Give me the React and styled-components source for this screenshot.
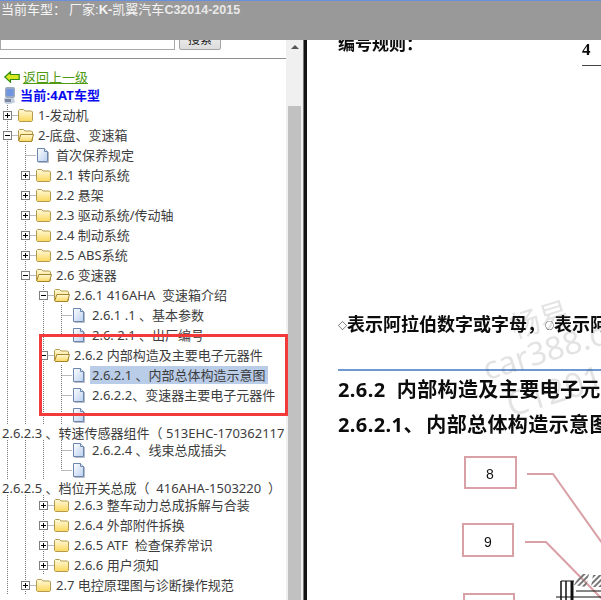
import React from "react";
import styled, { createGlobalStyle } from "styled-components";

const UI_FONT = `"Noto Sans", "Noto Sans CJK SC", sans-serif`;

// Styles
const GlobalStyle = createGlobalStyle`
  html, body {
    margin: 0;
    padding: 0;
    background: #fff;
    overflow: hidden;
  }
`;

const Page = styled.div`
  position: relative;
  display: flex;
  width: 601px;
  height: 600px;
  overflow: hidden;
  font-family: ${UI_FONT};
`;

const TopBar = styled.div`
  position: absolute;
  top: 0;
  left: 0;
  right: 0;
  z-index: 3;
  height: 39px;
  padding-left: 1px;
  border-top: 1px solid #6a8fdc;
  background: #999;
  color: #f4f4f4;
  font: 13px/18px "Liberation Sans", "Noto Sans CJK SC", sans-serif;
  white-space: pre;
`;

const BarGap = styled.span`
  display: inline-block;
  width: 3px;
`;

const BarCode = styled.span`
  font-size: 12.5px;
  font-weight: 700;
  color: #e8e8e8;
`;

const RedFrame = styled.div`
  position: absolute;
  top: 334px;
  left: 39px;
  z-index: 2;
  width: 243px;
  height: 76px;
  border: 3px solid #f23a3a;
`;

const Sidebar = styled.div`
  flex: none;
  width: 286px;
  height: 600px;
  overflow: hidden;
`;

const SearchRow = styled.div`
  display: flex;
  gap: 4px;
  height: 22px;
  padding-top: 28px;
`;

const SearchInput = styled.div`
  box-sizing: border-box;
  width: 175px;
  height: 22px;
  border: 1px solid #a9a9a9;
`;

const SearchButton = styled.div`
  box-sizing: border-box;
  width: 42px;
  height: 22px;
  border: 1px solid #a5a5a5;
  border-radius: 2px;
  background: linear-gradient(#f6f6f6, #dcdcdc);
  color: #222;
  font: 12px/20px "Noto Sans CJK SC", sans-serif;
  text-align: center;
`;

const Rule = styled.div`
  height: 1px;
  margin-top: 8px;
  background: #8f8f8f;
`;

const BackRow = styled.div`
  display: flex;
  align-items: center;
  gap: 3px;
  height: 18px;
  margin-top: 9px;
  padding-left: 4px;
`;

const BackLink = styled.a`
  color: #4f9a10;
  font-size: 13px;
  line-height: 18px;
  text-decoration: underline;
`;

const CurrentRow = styled.div`
  display: flex;
  align-items: center;
  gap: 4px;
  height: 18px;
  padding-left: 3px;
`;

const CurrentLabel = styled.b`
  color: #0a0aee;
  font-size: 13px;
  letter-spacing: 0.2px;
  line-height: 18px;
`;

const Tree = styled.div`
  margin-top: 1px;
  color: #3d3d3d;
  font-size: 13px;
  white-space: pre;
`;

const Row = styled.div`
  display: flex;
  align-items: center;
  height: 20px;
`;

const Guide = styled.span`
  flex: none;
  width: 18px;
  height: 100%;
  background: linear-gradient(#777 50%, transparent 50%) 7px 0 / 1px 2px repeat-y;
`;

const IconBox = styled.span`
  display: flex;
  flex: none;
  align-items: center;
  width: 18px;
`;

const Label = styled.span`
  margin-left: ${(p) => (p.$selected ? "0" : "2px")};
  padding: ${(p) => (p.$selected ? "0 2px" : "0")};
  background: ${(p) => (p.$selected ? "#b9cce8" : "transparent")};
  line-height: 18px;
`;

const WrappedLine = styled.div`
  height: 15px;
  padding-left: 2px;
  line-height: 17px;
`;

const ScrollTrack = styled.div`
  display: flex;
  flex: none;
  flex-direction: column;
  align-items: center;
  width: 17px;
  height: 600px;
  padding-top: 45px;
  box-sizing: border-box;
  background: #f0f0f0;
`;

const ScrollArrow = styled.div`
  width: 0;
  height: 0;
  border-right: 4px solid transparent;
  border-bottom: 4px solid #555;
  border-left: 4px solid transparent;
`;

const ScrollThumb = styled.div`
  flex: 1;
  width: 13px;
  margin-top: 57px;
  background: #c1c1c1;
`;

const Divider = styled.div`
  flex: none;
  box-sizing: border-box;
  width: 4px;
  height: 600px;
  border-left: 1px solid #777;
  background: #141414;
`;

const DocPane = styled.div`
  position: relative;
  flex: 1;
  min-width: 0;
  padding-left: 31px;
  overflow: hidden;
  filter: blur(0.25px);
  color: #0c0c0c;
  white-space: nowrap;
`;

const RuleLine = styled.div`
  display: flex;
  justify-content: space-between;
  height: 27px;
  margin-top: 33px;
`;

const RuleTitle = styled.b`
  font-size: 17px;
  line-height: 22px;
`;

const PartCode = styled.b`
  width: 19px;
  height: 26px;
  margin-top: 6px;
  border-bottom: 1px solid #444;
  font: 700 17px/22px "Liberation Serif", serif;
`;

const NumberNote = styled.b`
  display: block;
  margin-top: 252px;
  margin-bottom: 31px;
  font-size: 18px;
  line-height: 24px;
`;

const NoteMark = styled.span`
  font-size: 9px;
  font-weight: 400;
  vertical-align: 2px;
`;

const BlueRule = styled.div`
  height: 2px;
  background: #6d98d2;
`;

const SectionTitle = styled.b`
  display: block;
  margin-top: ${(p) => p.$top}px;
  font-size: 20px;
  letter-spacing: 0.4px;
  line-height: 28px;
  white-space: pre;
`;

const Diagram = styled.svg`
  display: block;
  width: 264px;
  height: 161px;
  margin-left: 1px;
  font-family: "Liberation Sans", sans-serif;
`;

const Watermark = styled.div`
  position: absolute;
  top: 325px;
  left: 163px;
  z-index: 1;
  color: rgba(60, 60, 60, 0.14);
  line-height: 1;
  transform: rotate(-17deg);
  transform-origin: left top;
`;

const MarkLine = styled.div`
  margin-top: ${(p) => p.$top || 0}px;
  margin-left: ${(p) => p.$left}px;
  font-size: ${(p) => p.$size}px;
`;

// Icons
const Joint = ({ type, last }) => {
  const isBox = type === "plus" || type === "minus";
  return (
    <svg width="18" height="20" style={{ flex: "none" }}>
      <g stroke="#777" strokeDasharray="1 1" fill="none">
        <path d={last ? "M7.5 0V10" : "M7.5 0V20"} />
        <path d="M7.5 10.5H18" />
      </g>
      {isBox && (
        <>
          <rect x="3.5" y="6.5" width="8" height="8" fill="#fff" stroke="#7f7f7f" />
          <path d="M5 10.5H10" stroke="#000" />
          {type === "plus" && <path d="M7.5 8V13" stroke="#000" />}
        </>
      )}
    </svg>
  );
};

const Folder = ({ open }) => (
  <svg width="16" height="14" viewBox="0 0 16 14">
    <defs>
      <linearGradient id="fold" x1="0" y1="0" x2="0" y2="1">
        <stop offset="0" stopColor="#fffadb" />
        <stop offset="1" stopColor="#fbd75c" />
      </linearGradient>
    </defs>
    <path d="M.5 12.5V2.5L1.5 1.5H5.5L7 3H13.5L14.5 4V12.5L13.5 13.5H1.5Z" fill="url(#fold)" stroke="#b39a4e" />
    {open && <path d="M.8 12.5L2.8 6.5H15.5L13.5 13.5H1.5Z" fill="url(#fold)" stroke="#a58430" />}
  </svg>
);

const Sheet = () => (
  <svg width="13" height="15" viewBox="0 0 13 15">
    <defs>
      <linearGradient id="sheet" x1="0" y1="0" x2="1" y2="1">
        <stop offset="0" stopColor="#fff" />
        <stop offset="1" stopColor="#b9d0ef" />
      </linearGradient>
    </defs>
    <path d="M1.5 .5H8.5L11.5 3.5V13.5H1.5Z" fill="url(#sheet)" stroke="#6d86ad" />
    <path d="M8.5 .5V3.5H11.5" fill="#dfe9f7" stroke="#6d86ad" />
    <path d="M12.5 4V14.5H2.5" fill="none" stroke="#b6bcc6" />
  </svg>
);

const BackArrow = () => (
  <svg width="16" height="12" viewBox="0 0 16 12">
    <path d="M.8 6L6.5 .8V3.5H15.2V8.5H6.5V11.2Z" fill="#d8e820" stroke="#2d8a12" strokeWidth="1.2" />
  </svg>
);

const Computer = () => (
  <svg width="13" height="17" viewBox="0 0 13 17">
    <rect x="2" y="0" width="10" height="11" rx="2" fill="#9aa8c0" />
    <rect x="3.5" y="2" width="7" height="7" fill="#6f94e0" />
    <path d="M1 11H11L12 15.5L7 17H3L1 15Z" fill="#c4cfe0" />
    <path d="M2 12H8V15H2Z" fill="#7a86a0" />
  </svg>
);

// Data
const topRows = [
  { guides: 0, joint: "plus", icon: "folder", label: "1-发动机" },
  { guides: 0, joint: "minus", icon: "open", label: "2-底盘、变速箱" },
  { guides: 1, joint: "leaf", icon: "sheet", label: "首次保养规定" },
  { guides: 1, joint: "plus", icon: "folder", label: "2.1 转向系统" },
  { guides: 1, joint: "plus", icon: "folder", label: "2.2 悬架" },
  { guides: 1, joint: "plus", icon: "folder", label: "2.3 驱动系统/传动轴" },
  { guides: 1, joint: "plus", icon: "folder", label: "2.4 制动系统" },
  { guides: 1, joint: "plus", icon: "folder", label: "2.5 ABS系统" },
  { guides: 1, joint: "minus", icon: "open", label: "2.6 变速器" },
  { guides: 2, joint: "minus", icon: "open", label: "2.6.1 416AHA  变速箱介绍" },
  { guides: 3, joint: "leaf", icon: "sheet", label: "2.6.1 .1 、基本参数" },
  { guides: 3, joint: "leaf", last: true, icon: "sheet", label: "2.6. 2.1 、出厂编号" },
  { guides: 2, joint: "minus", icon: "open", label: "2.6.2 内部构造及主要电子元器件" },
  { guides: 3, joint: "leaf", icon: "sheet", label: "2.6.2.1 、内部总体构造示意图", selected: true },
  { guides: 3, joint: "leaf", icon: "sheet", label: "2.6.2.2、变速器主要电子元器件" },
  { guides: 3, joint: "leaf", icon: "sheet", label: "" },
];

const middleRows = [
  { guides: 3, joint: "leaf", icon: "sheet", label: "2.6.2.4 、线束总成插头" },
  { guides: 3, joint: "leaf", last: true, icon: "sheet", label: "" },
];

const bottomRows = [
  { guides: 2, joint: "plus", icon: "folder", label: "2.6.3 整车动力总成拆解与合装" },
  { guides: 2, joint: "plus", icon: "folder", label: "2.6.4 外部附件拆换" },
  { guides: 2, joint: "plus", icon: "folder", label: "2.6.5 ATF  检查保养常识" },
  { guides: 2, joint: "plus", icon: "folder", label: "2.6.6 用户须知" },
  { guides: 1, joint: "plus", icon: "folder", label: "2.7 电控原理图与诊断操作规范" },
];

const TreeRow = ({ guides, joint, last, icon, label, selected }) => (
  <Row>
    {Array.from({ length: guides }, (_, i) => <Guide key={i} />)}
    <Joint type={joint} last={last} />
    <IconBox>
      {icon === "sheet" ? <Sheet /> : <Folder open={icon === "open"} />}
    </IconBox>
    {label && <Label $selected={selected}>{label}</Label>}
  </Row>
);

export default function App() {
  return (
    <Page>
      <GlobalStyle />
      <TopBar>当前车型：<BarGap />厂家:<b>K-</b>凯翼汽车<BarCode>C32014-2015</BarCode></TopBar>
      <RedFrame />

      <Sidebar>
        <SearchRow>
          <SearchInput />
          <SearchButton>搜索</SearchButton>
        </SearchRow>
        <Rule />
        <BackRow>
          <BackArrow />
          <BackLink>返回上一级</BackLink>
        </BackRow>
        <CurrentRow>
          <Computer />
          <CurrentLabel>当前:4AT车型</CurrentLabel>
        </CurrentRow>
        <Tree>
          {topRows.map((row, i) => <TreeRow key={i} {...row} />)}
          <WrappedLine>2.6.2.3 、转速传感器组件（ 513EHC-170362117</WrappedLine>
          {middleRows.map((row, i) => <TreeRow key={i} {...row} />)}
          <WrappedLine>2.6.2.5 、档位开关总成（  416AHA-1503220  ）</WrappedLine>
          {bottomRows.map((row, i) => <TreeRow key={i} {...row} />)}
        </Tree>
      </Sidebar>

      <ScrollTrack>
        <ScrollArrow />
        <ScrollThumb />
      </ScrollTrack>
      <Divider />

      <DocPane>
        <RuleLine>
          <RuleTitle>编号规则：</RuleTitle>
          <PartCode>4</PartCode>
        </RuleLine>
        <NumberNote>
          <NoteMark>◇</NoteMark>表示阿拉伯数字或字母，<NoteMark>○</NoteMark>表示阿拉伯数字
        </NumberNote>
        <BlueRule />
        <SectionTitle $top={5}>2.6.2  内部构造及主要电子元器件</SectionTitle>
        <SectionTitle $top={7}>2.6.2.1、{"\u200A"}内部总体构造示意图</SectionTitle>
        <Diagram viewBox="0 0 264 161">
          <defs>
            <pattern id="hatch" width="4" height="4" patternUnits="userSpaceOnUse" patternTransform="rotate(45)">
              <rect width="2" height="4" fill="#777" />
            </pattern>
          </defs>
          <g fill="none" stroke="#d9a0a5" strokeWidth="2">
            <rect x="126" y="18" width="51" height="31" />
            <rect x="124" y="85" width="50" height="32" />
            <rect x="125" y="155" width="50" height="31" />
            <path d="M188 35H214L263 104" />
            <path d="M186 103H207L263 160" />
          </g>
          <g fontSize="14" fill="#111" textAnchor="middle">
            <text x="151" y="40">8</text>
            <text x="149" y="108">9</text>
          </g>
          <path d="M235 146L241 135H250L247 148Z M252 148L254 136H264V148Z" fill="url(#hatch)" />
          <g fill="none" stroke="#111">
            <path d="M222 142H235" strokeWidth="1" />
            <path d="M222 142V161M227 142V161" strokeWidth="1.5" />
            <path d="M233 142V161" strokeWidth="3" />
            <path d="M217 158H264" strokeWidth="1.2" />
            <path d="M237 152H264" strokeWidth="1" />
          </g>
        </Diagram>
        <Watermark>
          <MarkLine $left={38} $size={30}>畅易</MarkLine>
          <MarkLine $left={0} $size={32}>car388.com</MarkLine>
          <MarkLine $top={8} $left={12} $size={34}>C12016</MarkLine>
        </Watermark>
      </DocPane>
    </Page>
  );
}
